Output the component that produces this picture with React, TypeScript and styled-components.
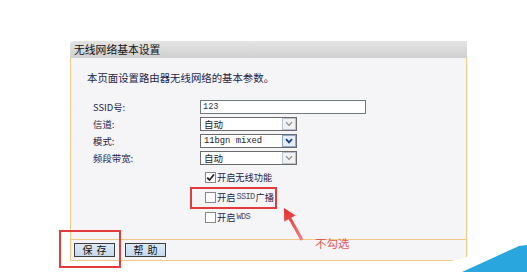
import React from 'react';
import styled, {createGlobalStyle} from 'styled-components';

const Global = createGlobalStyle`
  html, body {
    margin: 0;
    padding: 0;
    background: #fff;
    width: 527px;
    height: 272px;
    overflow: hidden;
  }
  * {
    box-sizing: border-box;
  }
`;

const cjk = `"Noto Sans CJK SC", "DejaVu Sans", sans-serif`;
const mono = `"Liberation Mono", "Noto Sans CJK SC", monospace`;
const edge = '#f1c983';

const Page = styled.div`
  position: relative;
  width: 527px;
  height: 272px;
  padding: 41px 0 0 70px;
  overflow: hidden;
  font-family: ${cjk};
  color: #22224a;
`;

const Panel = styled.div`
  width: 397px;
`;

const Header = styled.div`
  height: 17px;
  padding-left: 4px;
  border-top-left-radius: 4px;
  background: linear-gradient(#e4e4e4, #d0d0d0);
  color: #111;
  font-size: 10.8px;
  line-height: 17px;
`;

const Body = styled.div`
  border-left: 1px solid ${edge};
  border-right: 1px solid ${edge};
  background: #f5f5f7;
  padding: 14px 0 12px 0;
`;

const Description = styled.p`
  margin: 0 0 14px 16px;
  font-size: 10.4px;
  line-height: 12px;
  color: #1e1e46;
`;

const Form = styled.div`
  display: grid;
  grid-template-columns: 107px 1fr;
  grid-auto-rows: 17px;
  align-items: center;
  padding-left: 22px;
`;

const Label = styled.span`
  font-size: 9.4px;
  line-height: 12px;
`;

const TextInput = styled.div`
  width: 166px;
  height: 14px;
  border: 1px solid #6f7a7a;
  background: #fff;
  font-family: ${mono};
  font-size: 8.6px;
  line-height: 12px;
  padding-left: 2px;
  color: #333;
`;

const Select = styled.div<{$mono?: boolean}>`
  position: relative;
  width: 97px;
  height: 14px;
  border: 1px solid #6b6b6b;
  background: #fff;
  padding-left: 3px;
  font-family: ${p => (p.$mono ? mono : cjk)};
  font-size: ${p => (p.$mono ? '8.8px' : '9.5px')};
  line-height: 12px;
  color: #222;
  display: flex;
  align-items: center;
`;

const SelectArrow = styled.span<{$active?: boolean}>`
  position: absolute;
  right: 0;
  top: 0;
  width: 14px;
  height: 12px;
  border: 1px solid ${p => (p.$active ? '#8fa8d0' : '#b8c2d0')};
  background: ${p => (p.$active ? '#e6eefc' : '#f2f2f2')};
  display: flex;
  align-items: center;
  justify-content: center;
`;

const Options = styled.div`
  margin-top: 1px;
  padding-left: 134px;
  display: grid;
  grid-auto-rows: 20px;
  align-items: center;
`;

const Option = styled.label`
  position: relative;
  display: flex;
  align-items: center;
  gap: 1px;
  font-size: 9.2px;
  line-height: 12px;
  color: #22224a;
`;

const Box = styled.span`
  width: 11px;
  height: 11px;
  border: 1px solid #888;
  background: #fff;
  position: relative;
  display: inline-flex;
`;

const Latin = styled.span`
  font-family: ${mono};
  font-size: 8.6px;
  letter-spacing: -0.6px;
  color: #4a4a72;
`;

const ButtonBar = styled.div`
  display: flex;
  gap: 10px;
  border: 1px solid ${edge};
  padding: 3px 0 3px 3px;
  background: #f5f5f7;
`;

const Button = styled.div`
  width: 41px;
  height: 14px;
  border: 1px solid #3e3e3e;
  background: linear-gradient(#dceaf6, #c4d9ec);
  font-size: 10px;
  line-height: 12px;
  letter-spacing: 4px;
  padding-left: 4px;
  text-align: center;
  color: #111;
`;

const Mark = styled.div<{$x: number; $y: number; $w: number; $h: number}>`
  position: absolute;
  left: ${p => p.$x}px;
  top: ${p => p.$y}px;
  width: ${p => p.$w}px;
  height: ${p => p.$h}px;
  border: 2px solid #e23c3c;
  pointer-events: none;
`;

const Note = styled.span`
  position: absolute;
  left: 315px;
  top: 236px;
  font-size: 11.5px;
  line-height: 15px;
  color: #e25a5a;
`;

const Overlay = styled.svg`
  position: absolute;
  left: 0;
  top: 0;
  pointer-events: none;
`;

const Chevron = ({active}: {active?: boolean}) => (
  <svg width="8" height="6" viewBox="0 0 8 6">
    <path
      d="M1 1.2 L4 4.4 L7 1.2"
      fill="none"
      stroke={active ? '#1f3f8a' : '#8a8a8a'}
      strokeWidth={active ? 1.8 : 1.2}
    />
  </svg>
);

const Check = () => (
  <svg width="9" height="9" viewBox="0 0 9 9" style={{position: 'absolute', left: 0, top: 0}}>
    <path d="M1.2 4.6 L3.5 7 L8 1.5" fill="none" stroke="#222" strokeWidth="1.8" />
  </svg>
);

export default function App() {
  return (
    <Page>
      <Global />
      <Panel>
        <Header>无线网络基本设置</Header>
        <Body>
          <Description>本页面设置路由器无线网络的基本参数。</Description>
          <Form>
            <Label>SSID号:</Label>
            <TextInput>123</TextInput>
            <Label>信道:</Label>
            <Select>
              自动
              <SelectArrow>
                <Chevron />
              </SelectArrow>
            </Select>
            <Label>模式:</Label>
            <Select $mono>
              11bgn mixed
              <SelectArrow $active>
                <Chevron active />
              </SelectArrow>
            </Select>
            <Label>频段带宽:</Label>
            <Select>
              自动
              <SelectArrow>
                <Chevron />
              </SelectArrow>
            </Select>
          </Form>
          <Options>
            <Option>
              <Box>
                <Check />
              </Box>
              开启无线功能
            </Option>
            <Option>
              <Box />
              开启<Latin>SSID</Latin>广播
            </Option>
            <Option>
              <Box />
              开启<Latin>WDS</Latin>
            </Option>
          </Options>
        </Body>
        <ButtonBar>
          <Button>保存</Button>
          <Button>帮助</Button>
        </ButtonBar>
      </Panel>

      <Mark $x={190} $y={187} $w={87} $h={22} />
      <Mark $x={59} $y={230} $w={62} $h={38} />
      <Note>不勾选</Note>

      <Overlay width="527" height="272" viewBox="0 0 527 272">
        <defs>
          <linearGradient id="arrowFade" x1="302" y1="240" x2="284" y2="208" gradientUnits="userSpaceOnUse">
            <stop offset="0" stopColor="#f08080" />
            <stop offset="1" stopColor="#e42a2a" />
          </linearGradient>
        </defs>
        <polygon
          points="284,208 295.6,215.4 291.3,217.8 303.4,239.3 300.6,240.7 288.6,219.2 284.2,221.6"
          fill="url(#arrowFade)"
        />
        <polygon points="440,264 527,241 527,272 440,272" fill="#fff" />
        <polygon points="462,272 519,246 527,245 527,272" fill="#2aa6df" />
      </Overlay>
    </Page>
  );
}
